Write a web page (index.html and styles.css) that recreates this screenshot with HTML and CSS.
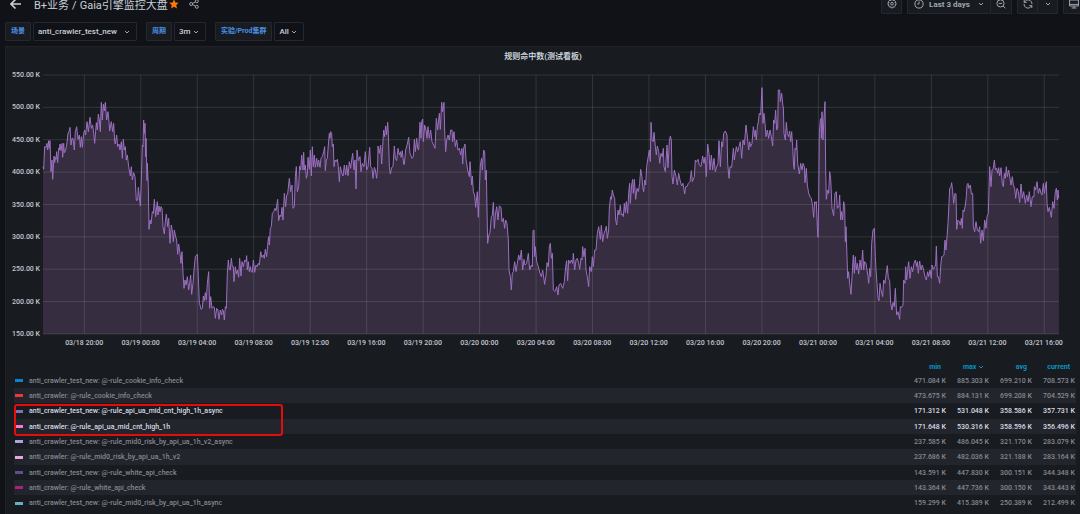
FILE: index.html
```html
<!DOCTYPE html>
<html lang="zh-CN">
<head>
    <meta charset="UTF-8">
    <meta name="viewport" content="width=device-width, initial-scale=1.0">
    <title>Gaia引擎监控大盘</title>
    <link rel="stylesheet" href="styles.css">
</head>
<body>
    <header class="topbar">
        <button class="icon-btn back" aria-label="Back">
            <svg viewBox="0 0 12 12" width="12" height="12"><path d="M11 6H1.5M5.5 1.5L1 6l4.5 4.5" stroke-width="1.6"/></svg>
        </button>
        <nav class="crumbs">
            <a href="#">B+业务</a>
            <span>/</span>
            <a href="#">Gaia引擎监控大盘</a>
        </nav>
        <button class="icon-btn star" aria-label="Star">
            <svg viewBox="0 0 10 10" width="10" height="10"><path d="M5 .4l1.4 3 3.3.4-2.4 2.3.6 3.3L5 7.8 2.1 9.4l.6-3.3L.3 3.8l3.3-.4z"/></svg>
        </button>
        <button class="icon-btn share" aria-label="Share">
            <svg viewBox="0 0 10 10" width="10" height="10"><circle cx="2.2" cy="5" r="1.5"/><circle cx="7.8" cy="2.2" r="1.5"/><circle cx="7.8" cy="7.8" r="1.5"/><path d="M3.6 4.3l2.8-1.4M3.6 5.7l2.8 1.4"/></svg>
        </button>

        <div class="tools">
            <button class="tool settings" aria-label="Settings">
                <svg viewBox="0 0 10 10" width="10" height="10"><path d="M4.1.6h1.8l.3 1.1 1-.6 1.3 1.3-.6 1 1.1.3v1.9l-1.1.3.6 1-1.3 1.3-1-.6-.3 1.2H4.1l-.3-1.2-1 .6-1.3-1.3.6-1L1 5.6V3.7l1.1-.3-.6-1 1.3-1.3 1 .6z"/><circle cx="5" cy="4.7" r="1.3"/></svg>
            </button>
            <div class="tool-group">
                <button class="tool range">
                    <svg viewBox="0 0 10 10" width="10" height="10"><circle cx="5" cy="5" r="4.1"/><path d="M5 2.4V5H3.2"/></svg>
                    <span>Last 3 days</span>
                    <svg class="caret" viewBox="0 0 6 6" width="6" height="6"><path d="M1 2l2 2 2-2"/></svg>
                </button>
                <button class="tool zoom-out" aria-label="Zoom out">
                    <svg viewBox="0 0 10 10" width="10" height="10"><circle cx="4.5" cy="4.4" r="3.6"/><path d="M2.8 4.4h3.4M7.1 7l2.3 2.3"/></svg>
                </button>
            </div>
            <div class="tool-group">
                <button class="tool refresh" aria-label="Refresh">
                    <svg viewBox="0 0 10 10" width="10" height="10"><path d="M3.2 1.3A4 4 0 0 1 9 5M6.8 8.7A4 4 0 0 1 1 5M1.2 1v2.4h2.4M8.8 9V6.6H6.4M1.2 3.4l2-2.1M8.8 6.6l-2 2.1"/></svg>
                </button>
                <button class="tool interval" aria-label="Refresh interval">
                    <svg class="caret" viewBox="0 0 6 6" width="6" height="6"><path d="M1 2l2 2 2-2"/></svg>
                </button>
            </div>
            <button class="tool kiosk" aria-label="Cycle view mode">
                <svg viewBox="0 0 10 10" width="10" height="10"><path d="M.6 1h8.8v6H.6zM.6 5.4h8.8M5 7v1.8M2.6 9h4.8"/></svg>
            </button>
        </div>
    </header>

    <section class="variables">
        <div class="variable">
            <label for="scene">场景</label>
            <select id="scene" class="scene"><option>anti_crawler_test_new</option></select>
        </div>
        <div class="variable">
            <label for="period">周期</label>
            <select id="period" class="period"><option>3m</option></select>
        </div>
        <div class="variable">
            <label for="cluster">实验/Prod集群</label>
            <select id="cluster" class="cluster"><option>All</option></select>
        </div>
    </section>

    <main class="panel">
        <h2>规则命中数(测试看板)</h2>

        <div class="graph">
            <div class="y-axis">
                <span>550.00 K</span>
                <span>500.00 K</span>
                <span>450.00 K</span>
                <span>400.00 K</span>
                <span>350.00 K</span>
                <span>300.00 K</span>
                <span>250.00 K</span>
                <span>200.00 K</span>
                <span>150.00 K</span>
            </div>
            <svg class="plot" viewBox="129 15 3048 777" preserveAspectRatio="none">
                <path id="area" class="area"/>
                <path id="grid" class="grid"/>
                <path id="line" class="line"/>
            </svg>
            <div class="x-axis">
                <span>03/18 20:00</span>
                <span>03/19 00:00</span>
                <span>03/19 04:00</span>
                <span>03/19 08:00</span>
                <span>03/19 12:00</span>
                <span>03/19 16:00</span>
                <span>03/19 20:00</span>
                <span>03/20 00:00</span>
                <span>03/20 04:00</span>
                <span>03/20 08:00</span>
                <span>03/20 12:00</span>
                <span>03/20 16:00</span>
                <span>03/20 20:00</span>
                <span>03/21 00:00</span>
                <span>03/21 04:00</span>
                <span>03/21 08:00</span>
                <span>03/21 12:00</span>
                <span>03/21 16:00</span>
            </div>
        </div>

        <div class="legend">
            <table>
                <thead>
                    <tr>
                        <th class="name"></th>
                        <th>min</th>
                        <th>max <svg class="caret" viewBox="0 0 6 6" width="6" height="6"><path d="M1 2l2 2 2-2"/></svg></th>
                        <th>avg</th>
                        <th>current</th>
                    </tr>
                </thead>
                <tbody>
                    <tr><td class="name"><i class="blue"></i>anti_crawler_test_new: @-rule_cookie_info_check</td><td>471.084 K</td><td>885.303 K</td><td>699.210 K</td><td>708.573 K</td></tr>
                    <tr><td class="name"><i class="red"></i>anti_crawler: @-rule_cookie_info_check</td><td>473.675 K</td><td>884.131 K</td><td>699.208 K</td><td>704.529 K</td></tr>
                    <tr class="active"><td class="name"><i class="purple"></i>anti_crawler_test_new: @-rule_api_ua_mid_cnt_high_1h_async</td><td>171.312 K</td><td>531.048 K</td><td>358.586 K</td><td>357.731 K</td></tr>
                    <tr class="active"><td class="name"><i class="pink"></i>anti_crawler: @-rule_api_ua_mid_cnt_high_1h</td><td>171.648 K</td><td>530.316 K</td><td>358.596 K</td><td>356.496 K</td></tr>
                    <tr><td class="name"><i class="lilac"></i>anti_crawler_test_new: @-rule_mid0_risk_by_api_ua_1h_v2_async</td><td>237.585 K</td><td>486.045 K</td><td>321.170 K</td><td>283.079 K</td></tr>
                    <tr><td class="name"><i class="rose"></i>anti_crawler: @-rule_mid0_risk_by_api_ua_1h_v2</td><td>237.686 K</td><td>482.036 K</td><td>321.188 K</td><td>283.164 K</td></tr>
                    <tr><td class="name"><i class="violet"></i>anti_crawler_test_new: @-rule_white_api_check</td><td>143.591 K</td><td>447.830 K</td><td>300.151 K</td><td>344.348 K</td></tr>
                    <tr><td class="name"><i class="magenta"></i>anti_crawler: @-rule_white_api_check</td><td>143.364 K</td><td>447.736 K</td><td>300.150 K</td><td>343.443 K</td></tr>
                    <tr><td class="name"><i class="cyan"></i>anti_crawler_test_new: @-rule_mid0_risk_by_api_ua_1h_async</td><td>159.299 K</td><td>415.389 K</td><td>250.389 K</td><td>212.499 K</td></tr>
                </tbody>
            </table>
            <div class="highlight"></div>
        </div>
    </main>

    <script src="chart.js"></script>
</body>
</html>
```
FILE: styles.css
```css
* {
    box-sizing: border-box;
}

body {
    margin: 0;
    height: 100vh;
    overflow: hidden;
    font-family: Roboto, "Noto Sans CJK SC", sans-serif;
    font-size: 8px;
    color: #c7d0d9;
    background-color: #111217;
}

button, select {
    font: inherit;
    color: inherit;
}

svg {
    display: block;
    fill: none;
    stroke: currentColor;
}

a {
    color: inherit;
    text-decoration: none;
}

/* Top bar */
.topbar {
    display: flex;
    align-items: center;
    height: 20px;
    margin-top: -6px;
    padding-left: 10px;
}

.icon-btn {
    padding: 0;
    border: none;
    background: none;
}

.crumbs {
    display: flex;
    gap: 3px;
    margin-left: 12px;
    padding-top: 3px;
    font-size: 11px;
    line-height: 16px;
    white-space: nowrap;
}

.star {
    margin-left: 1px;
    color: #ff780a;
}

.star svg {
    fill: currentColor;
    stroke: none;
}

.share {
    margin-left: 10px;
    color: #9fa7b3;
}

.tools {
    display: flex;
    gap: 5px;
    margin-left: auto;
    color: #9fa7b3;
}

.tool-group {
    display: flex;
}

.tool-group .tool + .tool {
    border-left: none;
}

.tool {
    display: flex;
    align-items: center;
    justify-content: center;
    gap: 5px;
    width: 21px;
    height: 19px;
    padding: 0;
    border: 1px solid #24272d;
    border-radius: 1px;
    background-color: #181b1f;
    font-weight: 700;
}

.range {
    width: 84px;
}

.range .caret {
    margin-left: 3px;
}

.interval {
    width: 20px;
}

.kiosk {
    margin-right: -4px;
}

/* Template variables */
.variables {
    display: flex;
    gap: 9px;
    padding: 8px 5px 5px;
}

.variable {
    display: flex;
    gap: 2px;
}

.variable label, .variable select {
    height: 19px;
    border: 1px solid #24272d;
    border-radius: 1px;
    line-height: 17px;
}

.variable label {
    padding: 0 5px;
    font-size: 7px;
    font-weight: 700;
    color: #4a90e2;
    background-color: #181b1f;
}

.variable select {
    appearance: none;
    padding: 0 4px;
    font-weight: 500;
    background: #111217 url("data:image/svg+xml,%3Csvg xmlns='http://www.w3.org/2000/svg' viewBox='0 0 6 6' fill='none' stroke='%239fa7b3'%3E%3Cpath d='M1 2l2 2 2-2'/%3E%3C/svg%3E") no-repeat right 6px center / 6px 6px;
}

.scene {
    width: 104px;
}

.period {
    width: 32px;
}

.cluster {
    width: 30px;
}

/* Panel */
.panel {
    height: 480px;
    margin-left: 5px;
    border: 1px solid #202226;
    border-right: none;
    background-color: #181b1f;
}

.panel h2 {
    margin: 0;
    font-size: 8px;
    line-height: 20px;
    font-weight: 700;
    text-align: center;
}

.graph {
    display: grid;
    grid-template-columns: 34px 1fr;
    column-gap: 3px;
    padding-right: 21px;
    margin-top: 8px;
    font-size: 7px;
    line-height: 8px;
    font-weight: 500;
    color: #c2c5d0;
}

.y-axis {
    display: flex;
    flex-direction: column;
    justify-content: space-between;
    margin: -4px 0;
    text-align: right;
}

.plot {
    width: 100%;
    height: 259px;
    overflow: visible;
}

.plot path {
    vector-effect: non-scaling-stroke;
}

.area {
    fill: #372d40;
    stroke: none;
}

.grid {
    stroke: rgba(200, 215, 205, 0.15);
}

.line {
    stroke: #9c70c2;
    stroke-linejoin: round;
}

.x-axis {
    grid-column: 2;
    display: grid;
    grid-template-columns: repeat(18, 1fr);
    margin: 5px -13px 0 13px;
    text-align: center;
    white-space: nowrap;
}

/* Legend */
.legend {
    position: relative;
    margin: 13px 4px 0 8px;
    font-size: 7px;
    line-height: 8px;
    color: #85878f;
}

.legend table {
    width: 100%;
    border-collapse: collapse;
    table-layout: fixed;
}

.legend th, .legend td {
    width: 43px;
    height: 15px;
    padding: 0 1px 0 0;
    font-weight: 500;
    text-align: right;
    white-space: nowrap;
}

.legend th {
    height: 13px;
    padding-right: 6px;
    color: #0a94c4;
    font-weight: 700;
}

.legend th .caret {
    display: inline-block;
    vertical-align: middle;
}

.legend .name {
    width: auto;
    text-align: left;
}

.legend tbody tr:nth-child(3n) td {
    height: 16px;
}

.legend tbody tr:nth-child(even) {
    background-color: #22252b;
}

.legend .active td {
    color: #d8d9e4;
}

.legend i {
    display: inline-block;
    width: 8px;
    height: 3px;
    margin: 0 6px 0 1px;
    vertical-align: middle;
}

.blue { background-color: #0a83c8; }
.red { background-color: #f2353c; }
.purple { background-color: #806eb7; }
.pink { background-color: #f27bd0; }
.lilac { background-color: #aea2e0; }
.rose { background-color: #e5a8e2; }
.violet { background-color: #614d93; }
.magenta { background-color: #a9207d; }
.cyan { background-color: #64b0c8; }

.highlight {
    position: absolute;
    top: 44px;
    left: 0;
    width: 269px;
    height: 32px;
    border: 2px solid #e60c0c;
    border-radius: 3px;
}
```
FILE: chart.js
```javascript
// Each segment: x offset and its "x,y" points
const segments = [
    [0, "128,290 131,298 134,230 138,232 141,220 143,240 146,212 148,235 150,212 153,305 156,270 158,328 162,258 164,278 166,262 168,268 170,245 173,278 176,235 178,240 180,222 183,242 186,220 188,262 191,220 193,248 197,240 200,225 204,190 207,185 210,172 213,225 216,205 219,205 223,240 226,185 230,170 234,208 238,195 241,232 244,200 247,232 251,190 254,180 257,195 261,155 265,185 270,142 274,175 278,165 281,190 284,220 287,182 289,158 292,180 295,132 298,150 301,185 304,97 307,150 310,103 313,123 316,97 320,150 324,125 327,155 329,183 334,155 338,185 341,160 344,215 346,222 350,195 353,230 357,222 360,240 364,215 367,265 370,208 373,240 376,230 379,270 382,255 386,290 391,318 394,290 397,330 401,308 405,320 409,392 413,390 415,352 418,380 421,408 424,330 427,225 429,230 431,150 433,190 435,160 437,260 438,205 441,332 442,280 445,350 447,478 450,450 453,462 457,425 460,430 463,388 467,440 472,395 474,435 477,408 480,425 483,410 486,415 489,470 493,492 496,455 499,432 503,470 506,445 510,520 514,465 518,490 520,515 523,480 527,500 530,510 533,553 536,522 540,550 543,580 546,545 549,610 552,655 555,630 558,645 562,620 566,660 569,640 572,615 575,673 579,640 582,600 586,560 592,553 595,620 598,700"],
    [600, "0,705 3,718 7,715 10,678 13,692 16,668 19,690 22,640 26,605 29,715 32,680 36,715 40,710 43,712 46,745 50,715 54,720 57,748 61,720 65,735 67,718 70,722 73,750 76,710 79,715 82,610 85,570 88,598 91,600 94,565 97,590 100,590 102,635 106,590 109,612 112,600 116,622 119,565 123,618 126,575 130,590 134,570 138,575 140,557 142,600 145,575 148,605 151,590 154,605 157,607 160,570 164,607 168,585 171,590 175,580 178,585 182,545 186,562 190,555 193,565 196,538 200,560 204,515 206,500 208,525 211,475 214,470 217,430 221,425 225,415 228,422 233,388 236,452 240,435 243,440 246,412 249,450 253,370 257,410 260,375 263,372 268,325 272,365 276,345 279,415 283,410 286,320 289,290 292,365 296,350 299,288 302,300 305,255 308,285 309,300 311,247 313,300 316,285 319,325 322,315 324,262 328,298 331,240 334,318 337,230 340,290 343,255 346,292 350,265 353,290 356,270 360,292 363,265 367,260 371,245 374,230 376,302 379,270 382,265 385,225 388,190 390,205 392,185 395,190 397,230 400,222 402,290 405,270 408,275 412,268 415,290 418,335 421,290 425,308 429,318 433,285 437,315 440,285 444,317 448,275 452,295 455,270 458,250 462,300 465,270 468,357 471,240 475,272 480,260 483,305 487,280 492,290 496,245 500,300 504,290 509,232 512,290 516,295 519,325 523,292 526,300 530,325 533,290 534,228 538,250 542,225 545,282 548,230 551,180 554,200 557,168 560,195 563,157 565,190 568,290 571,312 575,292 579,290 583,228 586,265 590,272 594,235 598,255"],
    [1200, "2,245 3,262 7,242 11,283 13,283 17,240 22,222 26,202 30,250 36,265 40,260 43,208 46,245 50,205 53,235 56,240 60,157 63,205 65,155 68,147 70,215 74,165 78,180 81,205 84,170 88,205 92,180 96,215 101,225 105,235 109,145 113,180 118,130 121,178 125,97 128,125 132,97 134,180 137,245 140,210 144,195 148,210 152,180 156,180 158,215 162,185 166,230 170,210 174,240 178,235 182,255 186,235 188,282 191,235 195,222 198,268 203,300 208,320 210,275 215,345 217,318 220,365 224,375 227,412 232,365 235,442 238,360 241,285 245,265 247,300 251,240 254,245 256,330 259,300 261,420 263,520 266,498 270,487 274,440 277,435 280,397 283,475 286,435 290,410 294,450 298,408 303,412 306,455 310,445 314,475 317,450 321,460 325,510 327,600 331,620 334,660 337,610 340,605 344,575 348,605 352,580 356,555 360,570 364,540 368,600 372,568 375,585 380,580 385,550 389,600 394,585 397,590 399,482 402,480 404,560 406,530 410,575 415,590 420,610 424,620 428,600 434,643 438,615 441,578 445,590 448,530 451,520 454,565 457,550 460,660 465,665 470,650 474,675 477,645 482,640 488,655 493,635 497,590 500,572 503,632 506,570 510,580 514,570 518,580 520,550 524,600 528,570 532,565 536,580 539,598 543,565 546,570 548,530 552,560 555,535 558,600 562,620 566,650 569,590 574,605 577,560 580,590 584,540 588,540 592,490 596,470"],
    [1800, "1,508 4,466 8,515 12,490 16,480 19,468 22,505 26,480 28,415 32,380 34,388 37,360 40,375 44,385 47,450 50,465 54,420 57,435 61,405 64,435 68,432 70,440 73,400 76,428 79,395 83,430 86,370 89,340 91,400 95,345 98,328 100,370 103,328 107,388 111,355 115,365 119,340 122,298 126,320 128,350 131,365 134,330 137,345 140,290 143,270 148,240 151,275 153,157 156,210 160,215 162,187 166,230 169,255 172,228 176,245 179,280 183,250 187,260 190,235 192,290 196,305 201,225 204,293 208,215 211,198 214,210 216,320 219,342 223,300 228,320 232,345 236,310 240,330 245,348 249,340 254,372 257,350 261,350 265,340 270,335 274,302 277,335 283,320 286,270 290,275 294,268 298,285 303,290 308,258 312,280 315,262 319,320 323,222 327,250 330,300 334,255 338,300 342,265 346,305 350,290 354,280 357,212 361,290 365,215 368,230 371,190 376,183 381,195 383,280 387,325 390,290 395,292 400,235 403,270 409,230 413,245 417,230 421,215 425,265 429,210 433,225 438,165 441,190 446,240 449,215 452,230 456,220 460,170 464,200 466,180 469,210 472,170 475,155 478,130 482,135 486,53 489,160 492,130 495,160 498,200 502,180 506,205 510,180 514,200 518,228 521,150 524,160 527,120 530,180 533,175 535,60 539,60 541,95 545,70 549,110"],
    [2340, "10,110 12,190 16,210 19,157 22,190 26,200 29,183 32,215 35,185 38,230 41,290 43,298 45,235 48,240 50,210 53,280 58,312 62,280 66,300 69,280 73,290 75,338 79,295 82,345 86,370 90,380 94,385 98,410 101,442 104,395 106,400 109,395 112,470 114,502 116,400 118,190 121,150 123,145 124,205 126,125 129,210 132,140 135,95 137,300 139,388 143,360 146,370 149,305 152,325 156,415 161,437 165,370 169,365 172,415 177,408 179,375 182,450 185,425 188,450 191,395 194,410 196,515 198,470 201,560 203,625 206,605 209,640 213,673 216,620 220,555 223,610 226,560 229,600 232,580 236,612 240,570 244,600 248,540 251,600 254,575 258,580 261,600 264,620 266,640 269,595 272,620 275,520 279,480 283,475 286,560 288,600 291,640 294,685 297,692 300,640 303,660 308,680 311,630 315,640 318,615 322,587 325,625 329,632 332,700 336,720 339,697 343,710 346,655 350,735 354,725 359,748 361,710 365,712 369,705 371,630 375,640 377,590 380,630 383,600 386,575 390,625 394,590 398,605 402,580 406,570 410,590 412,575 415,610 419,573 423,600 427,585 431,600 435,620 439,630 443,605 446,620 450,600 454,625 456,585 460,598 464,590 467,585 469,528 472,620 475,620 479,640 482,590 485,560 488,560 492,555 495,510 498,540 501,500 504,460 507,400 509,355 513,350 515,338 518,365 521,400 525,370 528,372 530,478 534,450 538,455 541,465 544,445 547,475 549,420 552,425 556,405 559,380 561,345 564,340 567,355 571,345 574,372 578,370 580,470 584,485 588,455 592,480 596,485 599,470 602,520 606,480 610,512 614,450 618,475 621,440 625,430 629,290 633,350 636,300 640,295 643,270 646,300 650,295 653,310 656,293 659,318 663,293 667,340 670,350 673,310 676,325 679,290 682,320 686,300 690,325 693,345 697,320 700,345 704,355 707,385 711,355 715,365 719,398 723,342 727,385 731,365 736,400 740,375 744,395 748,365 753,410 757,380 762,380 763,350 767,360 771,335 775,370 779,355 783,370 786,375 790,340 793,370 797,345 799,335 801,400 804,425 808,412 814,442 818,395 822,415 826,365 829,355 832,390 834,360 836,385"]
];

const left = 129, right = 3177, top_ = 15, bottom = 792;

const points = segments.flatMap(([offset, text]) =>
    text.split(" ").map(p => {
        const [x, y] = p.split(",").map(Number);
        return `${Math.max(left, x + offset)},${y}`;
    })
);

let grid = "";
for (let i = 0; i <= 8; i++) {
    grid += `M${left},${top_ + i * 97.1}H${right}`;
}
for (let i = 0; i < 18; i++) {
    grid += `M${253 + i * 169.4},${top_}V${bottom}`;
}

document.getElementById("grid").setAttribute("d", grid);
document.getElementById("line").setAttribute("d", "M" + points.join("L"));
document.getElementById("area").setAttribute("d", `M${left},${bottom}L${points.join("L")}L${right},${bottom}Z`);
```
